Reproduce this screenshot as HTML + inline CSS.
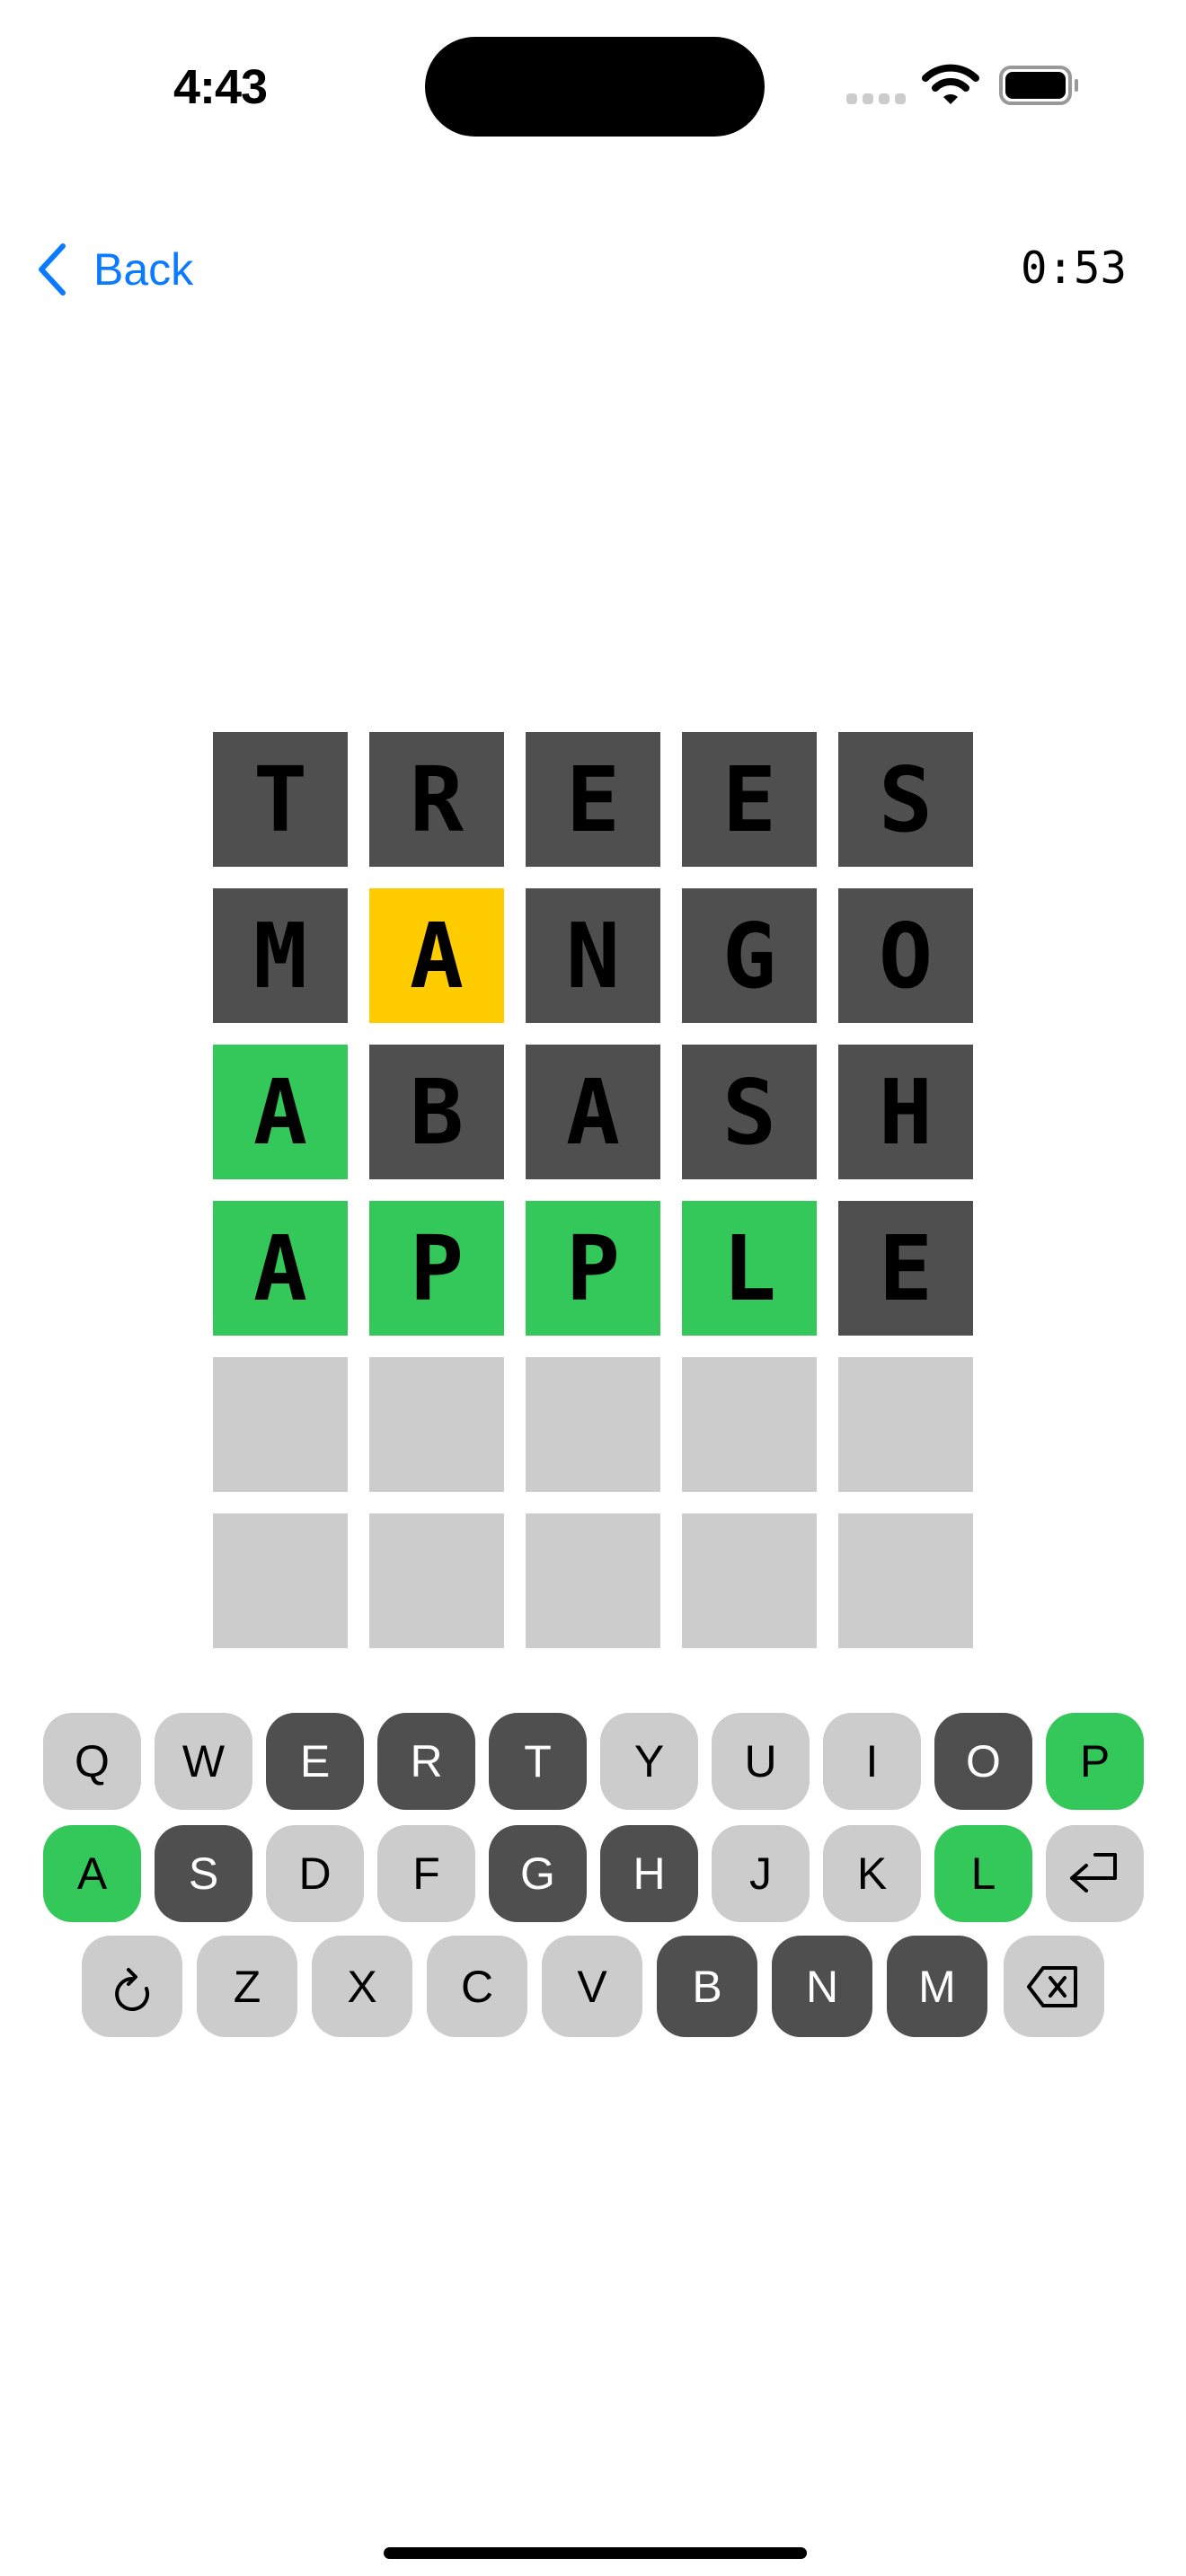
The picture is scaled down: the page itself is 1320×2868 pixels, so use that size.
<!DOCTYPE html>
<html><head><meta charset="utf-8"><style>
*{margin:0;padding:0;box-sizing:border-box}
body{width:1320px;height:2868px;background:#fff;position:relative;overflow:hidden;font-family:"Liberation Sans",sans-serif}
.abs{position:absolute}
.tile{position:absolute;width:150px;height:150px;display:flex;align-items:center;justify-content:center;font-family:"DejaVu Sans Mono",monospace;font-weight:bold;font-size:100px;color:#000}
.g{background:#4f4f4f}.y{background:#ffcc00}.gr{background:#34c759}.e{background:#cccccc}
.key{position:absolute;height:108px;border-radius:32px;display:flex;align-items:center;justify-content:center;font-size:50px;color:#000}
.key.g{color:#fff}
</style></head><body>
<div class="abs" style="left:193px;top:66px;font-size:54px;font-weight:bold;letter-spacing:-1px">4:43</div>
<div class="abs" style="left:473px;top:41px;width:378px;height:111px;border-radius:56px;background:#000"></div>
<div class="abs" style="left:942px;top:104px;width:12px;height:12px;border-radius:4px;background:#ccc"></div>
<div class="abs" style="left:960px;top:104px;width:12px;height:12px;border-radius:4px;background:#ccc"></div>
<div class="abs" style="left:978px;top:104px;width:12px;height:12px;border-radius:4px;background:#ccc"></div>
<div class="abs" style="left:996px;top:104px;width:12px;height:12px;border-radius:4px;background:#ccc"></div>
<svg class="abs" style="left:1026px;top:70px" width="64" height="48" viewBox="0 0 64 48">
<path d="M4 17 A40 40 0 0 1 60 17" stroke="#000" stroke-width="8" fill="none" stroke-linecap="round"/>
<path d="M15 28 A24 24 0 0 1 49 28" stroke="#000" stroke-width="8" fill="none" stroke-linecap="round"/>
<path d="M24 38 L32 46 L40 38 A12 12 0 0 0 24 38Z" fill="#000"/></svg>
<div class="abs" style="left:1112px;top:73px;width:81px;height:44px;border:4px solid #999;border-radius:13px"></div>
<div class="abs" style="left:1119px;top:80px;width:67px;height:30px;border-radius:8px;background:#000"></div>
<div class="abs" style="left:1196px;top:88px;width:4px;height:14px;border-radius:2px;background:#999"></div>
<svg class="abs" style="left:36px;top:268px" width="44" height="64" viewBox="0 0 44 64"><path d="M34 6 L10 32 L34 58" stroke="#0a7aff" stroke-width="6" fill="none" stroke-linecap="round" stroke-linejoin="round"/></svg>
<div class="abs" style="left:104px;top:271px;font-size:50px;color:#0a7aff">Back</div>
<div class="abs" style="left:1136px;top:270px;font-size:49px;font-family:'DejaVu Sans Mono',monospace">0:53</div>

<div class="tile g" style="left:237px;top:815px">T</div><div class="tile g" style="left:411px;top:815px">R</div><div class="tile g" style="left:585px;top:815px">E</div><div class="tile g" style="left:759px;top:815px">E</div><div class="tile g" style="left:933px;top:815px">S</div>
<div class="tile g" style="left:237px;top:989px">M</div><div class="tile y" style="left:411px;top:989px">A</div><div class="tile g" style="left:585px;top:989px">N</div><div class="tile g" style="left:759px;top:989px">G</div><div class="tile g" style="left:933px;top:989px">O</div>
<div class="tile gr" style="left:237px;top:1163px">A</div><div class="tile g" style="left:411px;top:1163px">B</div><div class="tile g" style="left:585px;top:1163px">A</div><div class="tile g" style="left:759px;top:1163px">S</div><div class="tile g" style="left:933px;top:1163px">H</div>
<div class="tile gr" style="left:237px;top:1337px">A</div><div class="tile gr" style="left:411px;top:1337px">P</div><div class="tile gr" style="left:585px;top:1337px">P</div><div class="tile gr" style="left:759px;top:1337px">L</div><div class="tile g" style="left:933px;top:1337px">E</div>
<div class="tile e" style="left:237px;top:1511px"></div><div class="tile e" style="left:411px;top:1511px"></div><div class="tile e" style="left:585px;top:1511px"></div><div class="tile e" style="left:759px;top:1511px"></div><div class="tile e" style="left:933px;top:1511px"></div>
<div class="tile e" style="left:237px;top:1685px"></div><div class="tile e" style="left:411px;top:1685px"></div><div class="tile e" style="left:585px;top:1685px"></div><div class="tile e" style="left:759px;top:1685px"></div><div class="tile e" style="left:933px;top:1685px"></div>

<div class="key e" style="left:48px;top:1907px;width:109px">Q</div>
<div class="key e" style="left:172px;top:1907px;width:109px">W</div>
<div class="key g" style="left:296px;top:1907px;width:109px">E</div>
<div class="key g" style="left:420px;top:1907px;width:109px">R</div>
<div class="key g" style="left:544px;top:1907px;width:109px">T</div>
<div class="key e" style="left:668px;top:1907px;width:109px">Y</div>
<div class="key e" style="left:792px;top:1907px;width:109px">U</div>
<div class="key e" style="left:916px;top:1907px;width:109px">I</div>
<div class="key g" style="left:1040px;top:1907px;width:109px">O</div>
<div class="key gr" style="left:1164px;top:1907px;width:109px">P</div>
<div class="key gr" style="left:48px;top:2032px;width:109px">A</div>
<div class="key g" style="left:172px;top:2032px;width:109px">S</div>
<div class="key e" style="left:296px;top:2032px;width:109px">D</div>
<div class="key e" style="left:420px;top:2032px;width:109px">F</div>
<div class="key g" style="left:544px;top:2032px;width:109px">G</div>
<div class="key g" style="left:668px;top:2032px;width:109px">H</div>
<div class="key e" style="left:792px;top:2032px;width:109px">J</div>
<div class="key e" style="left:916px;top:2032px;width:109px">K</div>
<div class="key gr" style="left:1040px;top:2032px;width:109px">L</div>
<div class="key e" style="left:1164px;top:2032px;width:109px"><svg width="60" height="50" viewBox="0 0 60 50"><path d="M30 4 H52 V30 H4 M20 16 L4 30 L20 44" stroke="#000" stroke-width="4" fill="none" stroke-linecap="round" stroke-linejoin="round"/></svg></div>
<div class="key e" style="left:91px;top:2155px;width:112px;height:113px"><svg width="44" height="60" viewBox="0 0 44 60"><path d="M22 21 A17 17 0 1 0 38 32" stroke="#000" stroke-width="4" fill="none" stroke-linecap="round"/><path d="M18 11 L26 19 L18 27" stroke="#000" stroke-width="4" fill="none" stroke-linecap="round" stroke-linejoin="round"/></svg></div>
<div class="key e" style="left:219px;top:2155px;width:112px;height:113px">Z</div>
<div class="key e" style="left:347px;top:2155px;width:112px;height:113px">X</div>
<div class="key e" style="left:475px;top:2155px;width:112px;height:113px">C</div>
<div class="key e" style="left:603px;top:2155px;width:112px;height:113px">V</div>
<div class="key g" style="left:731px;top:2155px;width:112px;height:113px">B</div>
<div class="key g" style="left:859px;top:2155px;width:112px;height:113px">N</div>
<div class="key g" style="left:987px;top:2155px;width:112px;height:113px">M</div>
<div class="key e" style="left:1117px;top:2155px;width:112px;height:113px"><svg width="60" height="50" viewBox="0 0 60 50"><path d="M18 4 H54 V46 H18 L2 25 Z" stroke="#000" stroke-width="4" fill="none" stroke-linejoin="round"/><path d="M26 15 L42 35 M42 15 L26 35" stroke="#000" stroke-width="4" stroke-linecap="round"/></svg></div>

<div class="abs" style="left:427px;top:2836px;width:471px;height:13px;border-radius:7px;background:#000"></div>
</body></html>
